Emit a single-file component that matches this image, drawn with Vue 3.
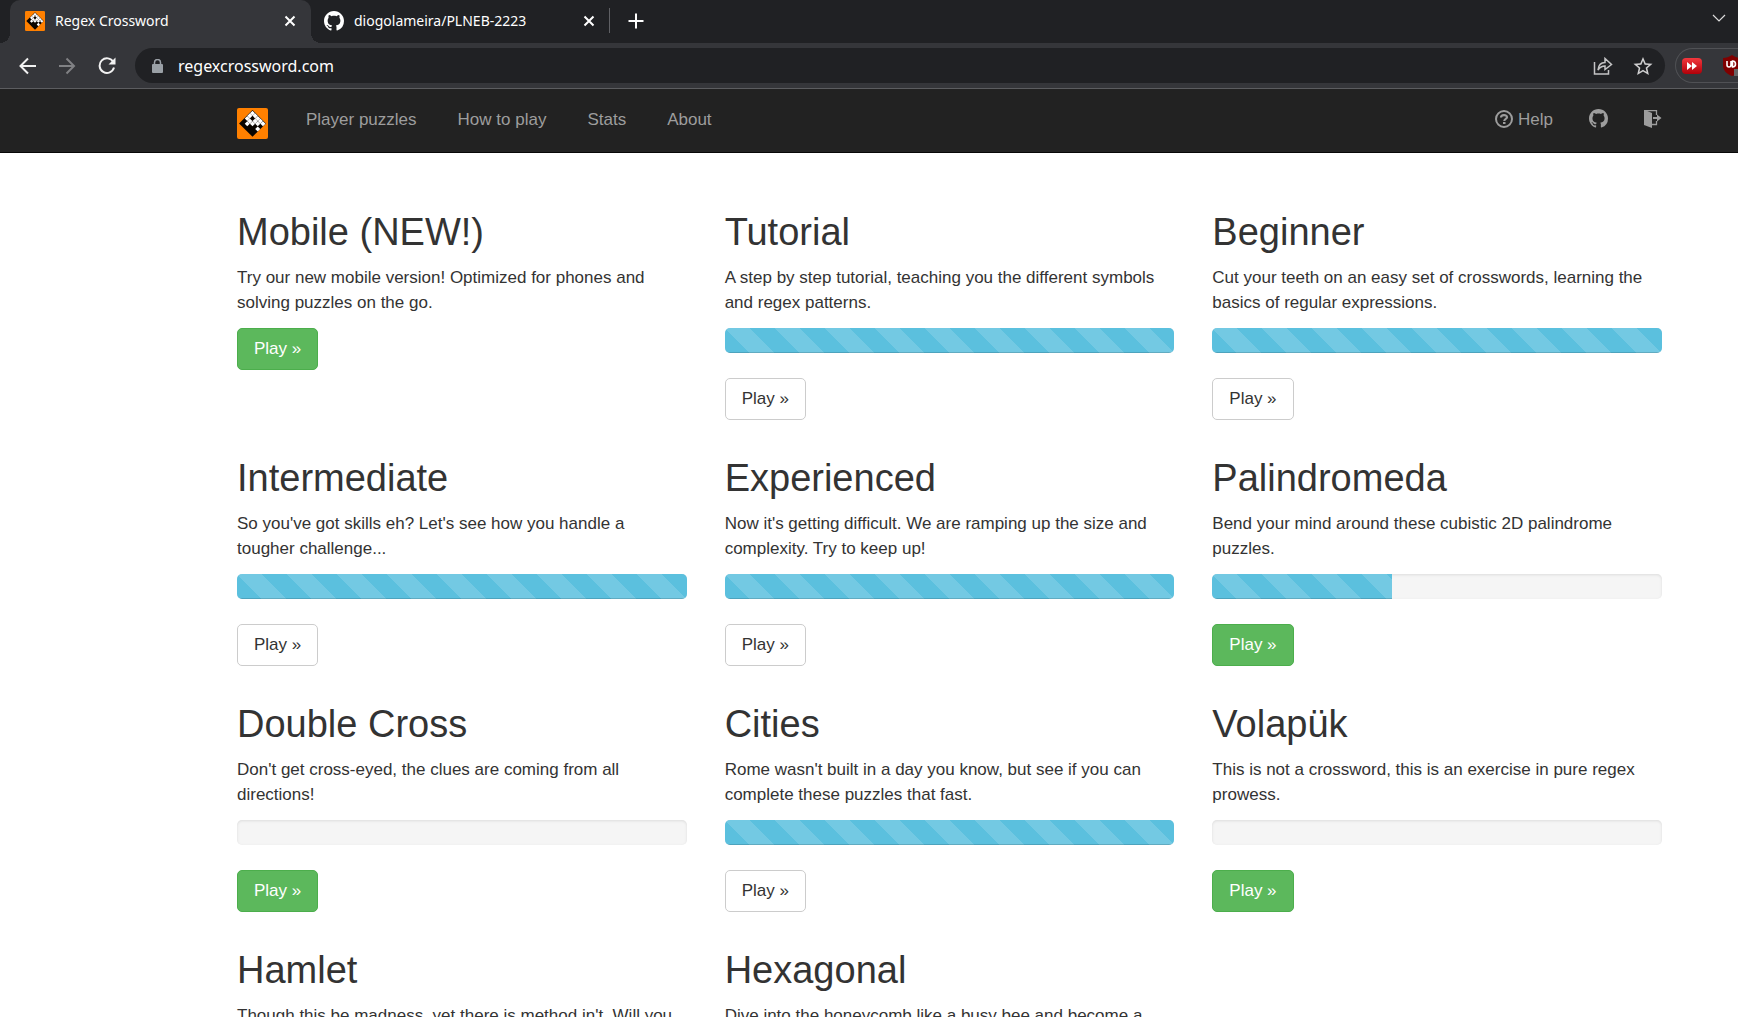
<script setup>
const octocat =
  'M8 0C3.58 0 0 3.58 0 8c0 3.54 2.29 6.53 5.47 7.59.4.07.55-.17.55-.38 0-.19-.01-.82-.01-1.49-2.01.37-2.53-.49-2.69-.94-.09-.23-.48-.94-.82-1.13-.28-.15-.68-.52-.01-.53.63-.01 1.08.58 1.23.82.72 1.21 1.87.87 2.33.66.07-.52.28-.87.51-1.07-1.78-.2-3.64-.89-3.64-3.95 0-.87.31-1.59.82-2.15-.08-.2-.36-1.02.08-2.12 0 0 .67-.21 2.2.82.64-.18 1.32-.27 2-.27s1.36.09 2 .27c1.53-1.04 2.2-.82 2.2-.82.44 1.1.16 1.92.08 2.12.51.56.82 1.27.82 2.15 0 3.07-1.87 3.75-3.65 3.95.29.25.54.73.54 1.48 0 1.07-.01 1.93-.01 2.2 0 .21.15.46.55.38A8.01 8.01 0 0 0 16 8c0-4.42-3.58-8-8-8z'

// White squares of the 5x5 board in the logo, as [column, row] before its 45 degree turn.
const squares = [
  [0, 0], [1, 0], [2, 0], [3, 0], [4, 0],
  [0, 1], [2, 1], [3, 1],
  [0, 2], [1, 2], [2, 2], [4, 2],
  [1, 3],
]

const links = ['Player puzzles', 'How to play', 'Stats', 'About']

const puzzles = [
  { title: 'Mobile (NEW!)', text: 'Try our new mobile version! Optimized for phones and solving puzzles on the go.', progress: null },
  { title: 'Tutorial', text: 'A step by step tutorial, teaching you the different symbols and regex patterns.', progress: 100 },
  { title: 'Beginner', text: 'Cut your teeth on an easy set of crosswords, learning the basics of regular expressions.', progress: 100 },
  { title: 'Intermediate', text: "So you've got skills eh? Let's see how you handle a tougher challenge...", progress: 100 },
  { title: 'Experienced', text: "Now it's getting difficult. We are ramping up the size and complexity. Try to keep up!", progress: 100 },
  { title: 'Palindromeda', text: 'Bend your mind around these cubistic 2D palindrome puzzles.', progress: 40 },
  { title: 'Double Cross', text: "Don't get cross-eyed, the clues are coming from all directions!", progress: 0 },
  { title: 'Cities', text: "Rome wasn't built in a day you know, but see if you can complete these puzzles that fast.", progress: 100 },
  { title: 'Volapük', text: 'This is not a crossword, this is an exercise in pure regex prowess.', progress: 0 },
  { title: 'Hamlet', text: "Though this be madness, yet there is method in't. Will you", progress: 0 },
  { title: 'Hexagonal', text: 'Dive into the honeycomb like a busy bee and become a', progress: 0 },
]
</script>

<template>
  <div class="browser">
    <svg class="defs" width="0" height="0" aria-hidden="true">
      <symbol id="logo" viewBox="0 0 31 31">
        <rect width="31" height="31" rx="2" fill="#ff8000" />
        <g transform="translate(15.5 2) rotate(45)">
          <rect width="19" height="19" fill="#0a0500" />
          <rect v-for="[c, r] in squares" :key="c + '-' + r" :x="c * 3.7 + 0.5" :y="r * 3.7 + 0.5" width="3.6" height="3.6" fill="#fff" />
        </g>
      </symbol>
      <symbol id="octocat" viewBox="0 0 16 16"><path :d="octocat" fill="currentColor" /></symbol>
      <symbol id="close" viewBox="0 0 12 12"><path d="M1.500 1.500l9 9M10.500 1.500l-9 9" stroke="currentColor" stroke-width="2" /></symbol>
    </svg>

    <header class="tabs">
      <div class="tab active">
        <svg width="20" height="20"><use href="#logo" /></svg>
        <span>Regex Crossword</span>
        <button aria-label="Close tab"><svg width="12" height="12"><use href="#close" /></svg></button>
      </div>
      <div class="tab">
        <svg width="20" height="20"><use href="#octocat" /></svg>
        <span>diogolameira/PLNEB-2223</span>
        <button aria-label="Close tab"><svg width="12" height="12"><use href="#close" /></svg></button>
      </div>
      <i class="divider"></i>
      <button class="new" aria-label="New tab"><svg width="16" height="16"><path d="M8 0.500v15M0.500 8h15" stroke="#fff" stroke-width="2" /></svg></button>
      <button class="search" aria-label="Search tabs"><svg width="14" height="8" fill="none"><path d="M1 1l6 6 6-6" stroke="#dcdcdc" stroke-width="1.200" /></svg></button>
    </header>

    <div class="toolbar">
      <div class="controls">
        <button aria-label="Back"><svg width="18" height="18" fill="none" stroke="#f1f1f1" stroke-width="2"><path d="M18 9H3M10 1.500L2.500 9l7.500 7.500" /></svg></button>
        <button aria-label="Forward"><svg width="18" height="18" fill="none" stroke="#808184" stroke-width="2"><path d="M1 9h15M8.500 1.500L16 9l-7.500 7.500" /></svg></button>
        <button aria-label="Reload"><svg width="18" height="18" fill="none"><path d="M15.300 5A7.300 7.300 0 1 0 16 10.500" stroke="#f1f1f1" stroke-width="2" /><path d="M17.500 0.500v7h-7z" fill="#f1f1f1" /></svg></button>
      </div>
      <div class="omnibox">
        <svg width="11" height="14"><rect y="5" width="11" height="9" rx="1" fill="#9aa0a6" /><path d="M2.500 6V3.500a3 3 0 0 1 6 0V6" fill="none" stroke="#9aa0a6" stroke-width="1.500" /></svg>
        <input aria-label="Address" value="regexcrossword.com" />
        <button aria-label="Share"><svg width="20" height="18" fill="none" stroke="#c4c4c5" stroke-width="1.500"><path d="M1.500 5v12h14v-4" /><path d="M5 13C5.500 8 8 5.500 12 5.500V1.500L18.500 7.500 12 12.500V9C9 9 7 10 5 13z" /></svg></button>
        <button aria-label="Bookmark"><svg width="20" height="20" viewBox="1.500 1 21 21" fill="#d0d0d1"><path d="M22 9.240l-7.190-.62L12 2 9.190 8.630 2 9.240l5.460 4.730L5.820 21 12 17.270 18.180 21l-1.630-7.030L22 9.240zM12 15.400l-3.760 2.270 1-4.280-3.320-2.880 4.380-.38L12 6.100l1.710 4.040 4.380.38-3.320 2.880 1 4.280L12 15.400z" /></svg></button>
      </div>
      <div class="extensions">
        <svg width="20" height="16"><defs><linearGradient id="red" x2="0" y2="1"><stop stop-color="#f3373d" /><stop offset="1" stop-color="#b00009" /></linearGradient></defs><rect width="20" height="16" rx="4" fill="url(#red)" /><path d="M5 4l5 4-5 4zM10 4l5 4-5 4z" fill="#fff" /></svg>
        <svg width="20" height="21" viewBox="0 0 20 21"><path d="M10 0c3 2 6 3 9 3v7c0 6-4 9-9 11-5-2-9-5-9-11V3c3 0 6-1 9-3z" fill="#800000" /><path d="M5 6v4a2 2 0 0 0 4 0V6M10.500 6v6a3 3 0 0 0 0-6z" fill="none" stroke="#fff" stroke-width="1.600" /><rect x="12" y="14" width="8" height="7" fill="#666" /></svg>
      </div>
    </div>

    <nav class="navbar">
      <a class="brand" href="#" aria-label="Regex Crossword"><svg width="31" height="31"><use href="#logo" /></svg></a>
      <div class="links">
        <a v-for="link in links" :key="link" href="#">{{ link }}</a>
      </div>
      <div class="right">
        <a href="#"><svg width="18" height="18" fill="none" stroke="currentColor"><circle cx="9" cy="9" r="8" stroke-width="2" /><path d="M6 7.500C6 4.500 12 4.300 12 7.300 12 9 9.300 8.800 9.300 11" stroke-width="2.200" /><path d="M8 12h2.500v2H8z" fill="currentColor" stroke="none" /></svg>Help</a>
        <a href="#" aria-label="GitHub"><svg width="19" height="19"><use href="#octocat" /></svg></a>
        <a href="#" aria-label="Log out"><svg width="18" height="18" fill="currentColor"><path d="M0 0h1l7 3v15l-8-3z" /><path d="M1 .5h11.500V5M8 14.500h4.500V11" fill="none" stroke="currentColor" stroke-width="1.300" /><path d="M9 7h4V4.500L17.500 8 13 11.500V9H9z" /></svg></a>
      </div>
    </nav>

    <main class="grid">
      <section v-for="p in puzzles" :key="p.title" class="card">
        <h2>{{ p.title }}</h2>
        <p>{{ p.text }}</p>
        <div v-if="p.progress !== null" class="progress" role="progressbar" :aria-label="p.title" :aria-valuenow="p.progress">
          <div class="bar" :style="{ width: p.progress + '%' }"></div>
        </div>
        <button class="btn" :class="{ success: p.progress !== 100 }">Play »</button>
      </section>
    </main>
  </div>
</template>

<style>
body {
  margin: 0;
  background: #fff;
}
</style>

<style scoped>
* {
  box-sizing: border-box;
}
.browser {
  height: 100vh;
  overflow: hidden;
  font-family: "Liberation Sans", Arial, sans-serif;
  font-size: 17px;
  line-height: 25px;
  color: #333;
}
.defs {
  position: absolute;
}
svg {
  display: block;
  flex: none;
}
button {
  font: inherit;
  padding: 0;
  border: 0;
  background: none;
  color: inherit;
}
.tabs {
  display: flex;
  align-items: center;
  height: 43px;
  padding: 0 12px 2px 10px;
  background: #202124;
  color: #fff;
  font: 14px/20px "Noto Sans", "Open Sans", sans-serif;
}
.tab {
  display: flex;
  align-items: center;
  width: 298px;
  height: 41px;
  padding: 0 14px 0 13px;
  gap: 10px;
}
.tab span {
  flex: 1;
  white-space: nowrap;
}
.tab.active {
  position: relative;
  align-self: flex-start;
  width: 301px;
  height: 43px;
  padding: 0 15px 2px;
  border-radius: 10px 10px 0 0;
  background: #35363a;
}
.tab.active::before,
.tab.active::after {
  content: "";
  position: absolute;
  bottom: 0;
  width: 10px;
  height: 10px;
}
.tab.active::before {
  right: 100%;
  background: radial-gradient(circle at 0 0, #202124 10px, #35363a 10px);
}
.tab.active::after {
  left: 100%;
  background: radial-gradient(circle at 100% 0, #202124 10px, #35363a 10px);
}
.divider {
  width: 1px;
  height: 25px;
  margin-right: 18px;
  background: #5f6064;
}
.search {
  margin-left: auto;
  padding-bottom: 6px;
}
.toolbar {
  display: flex;
  align-items: center;
  height: 46px;
  padding-left: 18px;
  overflow: hidden;
  background: #35363a;
  border-bottom: 1px solid #5c5d60;
}
.controls {
  display: flex;
  gap: 22px;
  margin-right: 19px;
}
.omnibox {
  flex: 1;
  display: flex;
  align-items: center;
  gap: 20px;
  height: 35px;
  padding: 0 12px 0 17px;
  border-radius: 18px;
  background: #202124;
}
.omnibox input {
  flex: 1;
  min-width: 0;
  height: 30px;
  margin-left: -5px;
  padding: 0;
  border: 0;
  background: none;
  color: #fff;
  font: 16px/30px "Noto Sans", "Open Sans", sans-serif;
}
.extensions {
  display: flex;
  align-items: center;
  gap: 20px;
  height: 35px;
  width: 63px;
  margin-left: 10px;
  padding-left: 6px;
  border: 1px solid #505155;
  border-right: 0;
  border-radius: 18px 0 0 18px;
}
.navbar {
  display: flex;
  align-items: center;
  gap: 38px;
  height: 64px;
  padding: 0 76px 0 237px;
  background: #222;
  border-bottom: 1px solid #080808;
}
.links {
  display: flex;
  gap: 41px;
}
.navbar a {
  display: flex;
  align-items: center;
  gap: 5px;
  padding-bottom: 2px;
  color: #9d9d9d;
  text-decoration: none;
}
.navbar .brand {
  padding: 5px 0 0;
}
.right {
  display: flex;
  gap: 36px;
  margin-left: auto;
}
.right svg {
  margin-bottom: 2px;
}
.grid {
  display: grid;
  grid-template-columns: repeat(3, 1fr);
  grid-auto-rows: 246px;
  column-gap: 38px;
  padding: 33px 76px 0 237px;
}
h2 {
  margin: 26px 0 12px;
  font-size: 38px;
  line-height: 41px;
  font-weight: 400;
}
p {
  margin: 0 0 13px;
  padding-right: 4px;
}
.progress {
  height: 25px;
  margin-bottom: 25px;
  overflow: hidden;
  border-radius: 5px;
  background: #f5f5f5;
  box-shadow: inset 0 1px 3px rgba(0, 0, 0, 0.1);
}
.bar {
  height: 100%;
  background: #5bc0de linear-gradient(45deg, rgba(255, 255, 255, 0.15) 25%, transparent 25%, transparent 50%, rgba(255, 255, 255, 0.15) 50%, rgba(255, 255, 255, 0.15) 75%, transparent 75%) 0 0 / 50px 50px;
  box-shadow: inset 0 -1px 0 rgba(0, 0, 0, 0.15);
}
.btn {
  height: 42px;
  padding: 0 16px 2px;
  border: 1px solid #ccc;
  border-radius: 5px;
  background: #fff;
  color: #333;
}
.btn.success {
  border-color: #4cae4c;
  background: #5cb85c;
  color: #fff;
}
</style>
